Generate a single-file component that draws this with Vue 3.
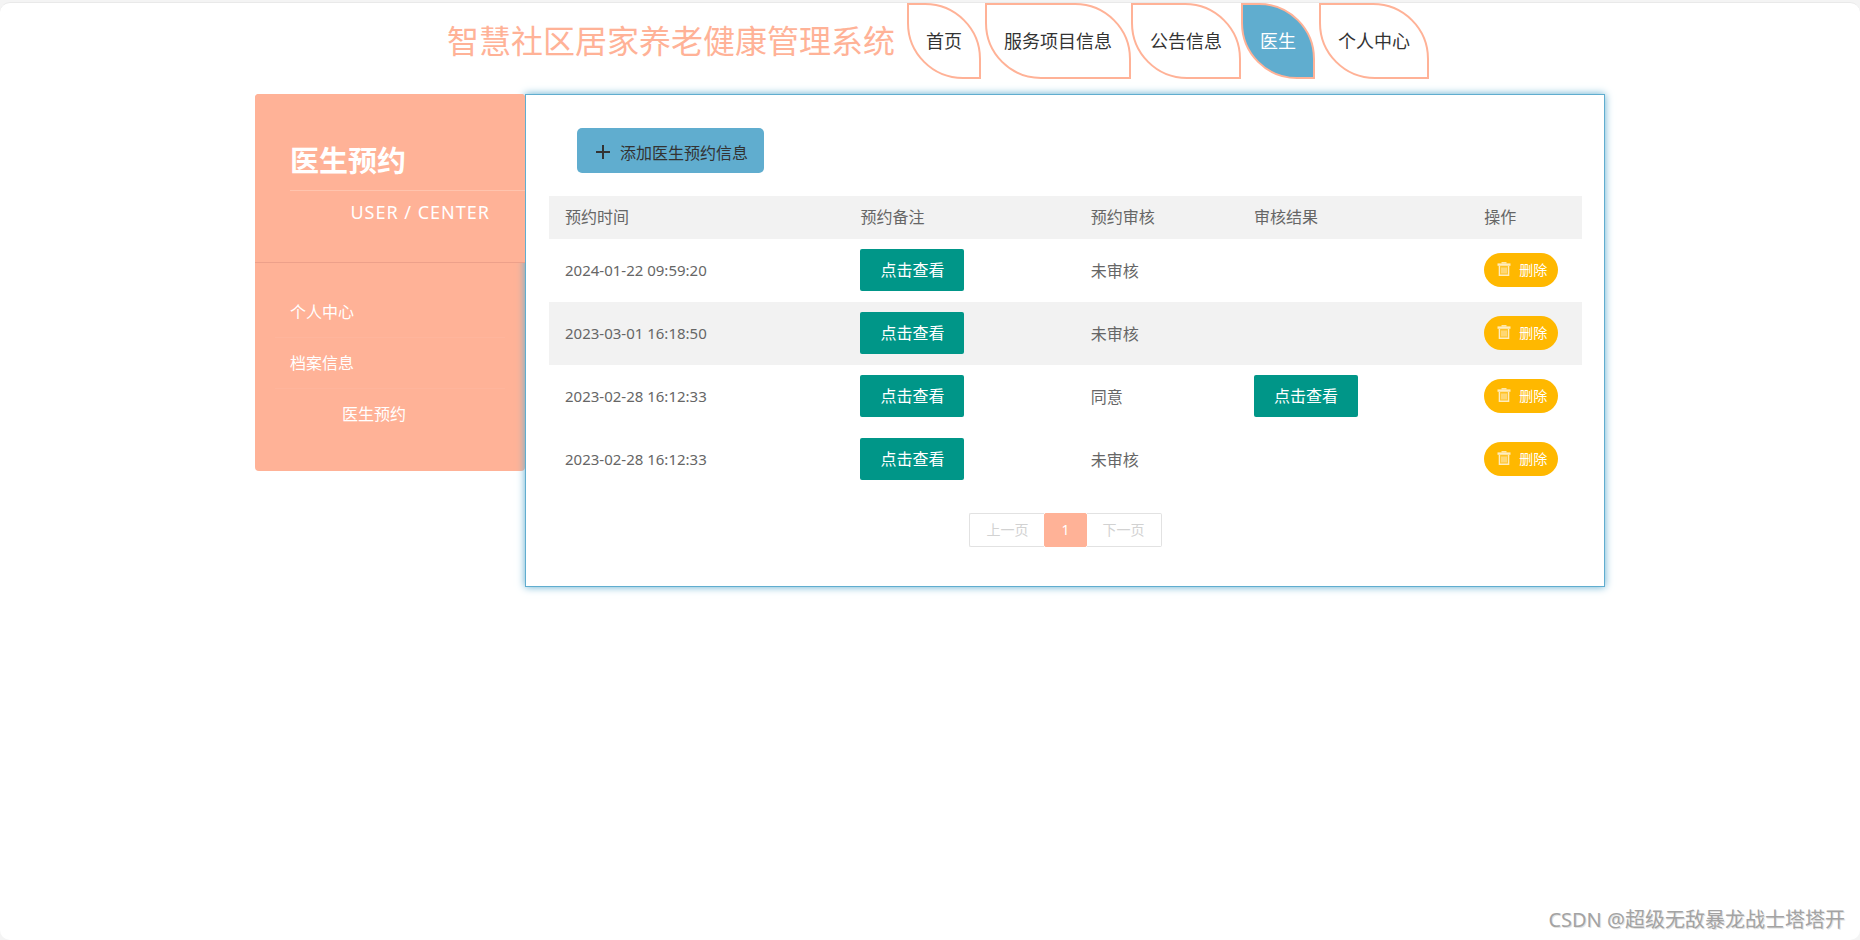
<script setup>
import { ref } from 'vue'

const navItems = ref([
  { name: '首页', spaced: true },
  { name: '服务项目信息' },
  { name: '公告信息' },
  { name: '医生', active: true, spaced: true },
  { name: '个人中心' }
])

const menuItems = ref([
  { name: '个人中心' },
  { name: '档案信息' },
  { name: '医生预约', active: true }
])

const appointments = ref([
  { id: 1, time: '2024-01-22 09:59:20', status: '未审核', hasResult: false },
  { id: 2, time: '2023-03-01 16:18:50', status: '未审核', hasResult: false },
  { id: 3, time: '2023-02-28 16:12:33', status: '同意', hasResult: true },
  { id: 4, time: '2023-02-28 16:12:33', status: '未审核', hasResult: false }
])

const selectedId = ref(2)

const handleDelete = (id) => {
  appointments.value = appointments.value.filter(item => item.id !== id)
}
</script>

<template>
  <div class="page">
    <header class="header">
      <h1 class="site-title">智慧社区居家养老健康管理系统</h1>
      <nav class="nav">
        <a
          v-for="item in navItems"
          :key="item.name"
          href="#"
          class="nav-link"
          :class="{ active: item.active, spaced: item.spaced }"
        >{{ item.name }}</a>
      </nav>
    </header>

    <div class="container">
      <aside class="sidebar">
        <div class="sidebar-head">
          <h2>医生预约</h2>
          <p>USER / CENTER</p>
        </div>
        <ul class="menu">
          <li v-for="item in menuItems" :key="item.name" :class="{ active: item.active }">
            <a href="#">{{ item.name }}</a>
          </li>
        </ul>
      </aside>

      <main class="content">
        <button type="button" class="add-button">
          <svg width="14" height="14" viewBox="0 0 14 14" aria-hidden="true">
            <path d="M7 0v14M0 7h14" stroke="#333" stroke-width="2" />
          </svg>
          添加医生预约信息
        </button>

        <table class="table">
          <colgroup>
            <col class="col-time" />
            <col class="col-note" />
            <col class="col-status" />
            <col class="col-result" />
            <col />
          </colgroup>
          <thead>
            <tr>
              <th>预约时间</th>
              <th>预约备注</th>
              <th>预约审核</th>
              <th>审核结果</th>
              <th>操作</th>
            </tr>
          </thead>
          <tbody>
            <tr
              v-for="item in appointments"
              :key="item.id"
              :class="{ selected: item.id === selectedId }"
              @mouseenter="selectedId = item.id"
            >
              <td class="time">{{ item.time }}</td>
              <td><button type="button" class="view-button">点击查看</button></td>
              <td>{{ item.status }}</td>
              <td>
                <button v-if="item.hasResult" type="button" class="view-button">点击查看</button>
              </td>
              <td>
                <button type="button" class="delete-button" @click="handleDelete(item.id)">
                  <svg width="14" height="14" viewBox="0 0 14 14" fill="none" stroke="#fff" aria-hidden="true">
                    <path d="M4.5 0.8h5" stroke-width="1.4" />
                    <path d="M0.5 2.6h13" stroke-width="2.4" />
                    <path d="M2.4 4v9.3h9.2V4" fill="#fff" fill-opacity="0.2" stroke-width="1.4" />
                    <path d="M5 5.5v6M7 5.5v6M9 5.5v6" stroke-width="1" />
                  </svg>
                  删除
                </button>
              </td>
            </tr>
          </tbody>
        </table>

        <div class="pagination">
          <button type="button" disabled>上一页</button>
          <button type="button" class="current">1</button>
          <button type="button" disabled>下一页</button>
        </div>
      </main>
    </div>

    <div class="watermark">CSDN @超级无敌暴龙战士塔塔开</div>
  </div>
</template>

<style>
body {
  background: #f4f4f4;
}
</style>

<style scoped>
.page {
  position: relative;
  box-sizing: border-box;
  min-height: calc(100vh - 2px);
  margin-top: 2px;
  border-top: 1px solid #e9e9e9;
  border-radius: 10px;
  background: #fff;
  color: #666;
  font-family: 'Noto Sans', 'Noto Sans CJK SC', sans-serif;
  font-size: 16px;
}

a {
  color: inherit;
  text-decoration: none;
}

button {
  font-family: inherit;
  cursor: pointer;
}

.header {
  display: flex;
  justify-content: center;
  align-items: center;
  gap: 12px;
  padding-left: 16px;
}

.site-title {
  margin: 0;
  color: #ffb297;
  font-size: 32px;
  font-weight: 400;
  line-height: 48px;
}

.nav {
  display: flex;
}

.nav-link {
  padding: 0 17px;
  border: 2px solid #ffb297;
  border-radius: 0 56px 0 56px;
  color: #333;
  font-size: 18px;
  line-height: 72px;
}

.nav-link.active {
  background: #60adcf;
  color: #fff;
}

.nav-link.spaced {
  margin-right: 4px;
}

.container {
  display: flex;
  align-items: flex-start;
  max-width: 1350px;
  margin: 15px auto 0;
}

.sidebar {
  width: 20%;
  border-radius: 4px;
  background: #ffb297;
  color: #fff;
}

.sidebar-head {
  position: relative;
  z-index: 1;
  padding: 44px 0 31px 35px;
  border-bottom: 1px solid #eda08a;
  border-radius: 4px 4px 0 0;
  background: #ffb297;
}

.sidebar-head h2 {
  margin: 0;
  padding-bottom: 6px;
  border-bottom: 1px solid #ffc4ae;
  font-size: 29px;
  line-height: 46px;
}

.sidebar-head p {
  margin: 0;
  padding: 6px 35px 4px 0;
  font-size: 18px;
  letter-spacing: 1px;
  line-height: 30px;
  text-align: right;
}

.menu {
  margin: 0;
  padding: 24px 20px 32px;
  list-style: none;
}

.menu li {
  padding-left: 15px;
  border-bottom: 1px solid #ffb59c;
  line-height: 50px;
}

.menu li.active {
  padding-left: 67px;
  border-bottom: none;
}

.content {
  box-sizing: border-box;
  width: 80%;
  padding: 33px 22px 39px 23px;
  border: 1px solid #60adcf;
  background: #fff;
  box-shadow: 0 0 8px #60adcf;
}

.add-button {
  display: flex;
  align-items: center;
  gap: 10px;
  height: 45px;
  margin: 0 0 23px 28px;
  padding: 2px 16px 0 19px;
  border: none;
  border-radius: 5px;
  background: #60adcf;
  color: #333;
  font-size: 16px;
}

.table {
  width: 100%;
  border-collapse: collapse;
  table-layout: fixed;
}

.col-time {
  width: 28.6%;
}

.col-note {
  width: 22.3%;
}

.col-status {
  width: 15.8%;
}

.col-result {
  width: 22.3%;
}

th {
  box-sizing: border-box;
  height: 43px;
  padding: 0 16px 3px;
  background: #f2f2f2;
  font-weight: 400;
  text-align: left;
}

td {
  box-sizing: border-box;
  height: 63px;
  padding: 0 16px 2px;
}

.time {
  font-size: 15px;
}

tbody tr.selected {
  background: #f2f2f2;
}

.view-button {
  display: block;
  height: 42px;
  padding: 0 20px 2px;
  border: none;
  border-radius: 2px;
  background: #009688;
  color: #fff;
  font-size: 16px;
}

.delete-button {
  display: flex;
  align-items: center;
  gap: 8px;
  height: 34px;
  padding: 0 11px 2px 13px;
  border: none;
  border-radius: 17px;
  background: #ffb800;
  color: #fff;
  font-size: 14px;
  white-space: nowrap;
}

.delete-button svg {
  flex: none;
  opacity: 0.75;
}

.pagination {
  display: flex;
  justify-content: center;
  margin-top: 22px;
}

.pagination button {
  height: 34px;
  padding: 0 16px 2px;
  border: 1px solid #e2e2e2;
  background: #fff;
  color: #d2d2d2;
  font-size: 14px;
}

.pagination button:first-child {
  border-right: none;
  border-radius: 2px 0 0 2px;
}

.pagination button:last-child {
  border-left: none;
  border-radius: 0 2px 2px 0;
}

.pagination .current {
  border-color: #ffb297;
  border-radius: 2px;
  background: #ffb297;
  color: #fff;
}

.watermark {
  position: absolute;
  right: 15px;
  bottom: 5px;
  color: #a3a3a3;
  font-size: 20px;
  line-height: 30px;
  text-shadow: 1px 1px 0 #e2e2e2;
}
</style>
